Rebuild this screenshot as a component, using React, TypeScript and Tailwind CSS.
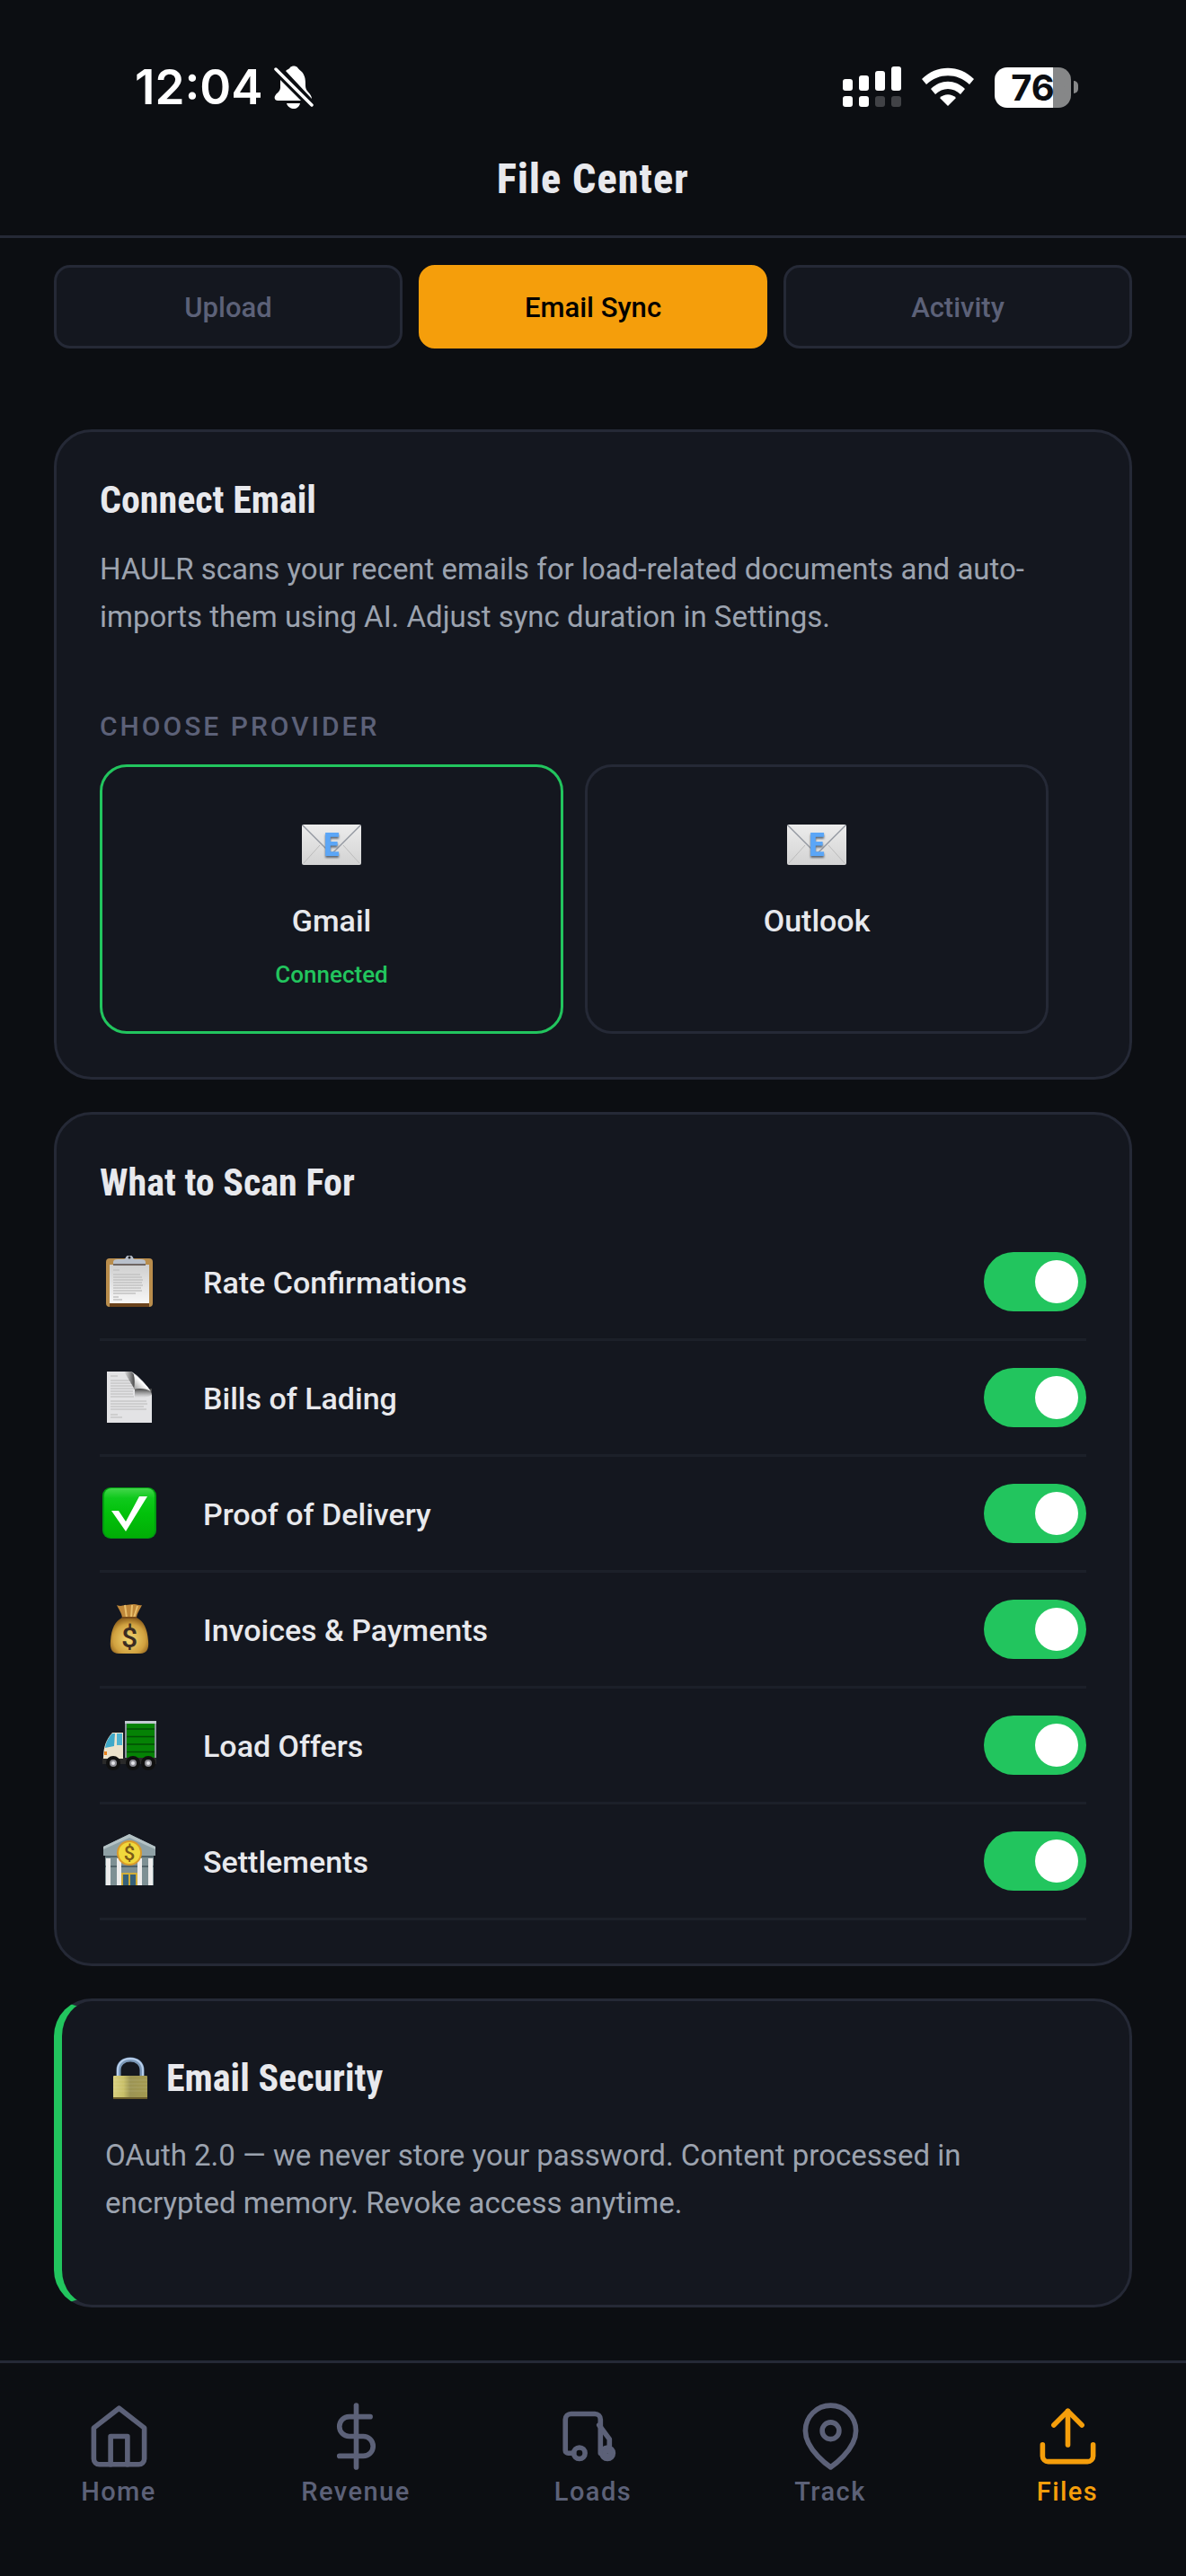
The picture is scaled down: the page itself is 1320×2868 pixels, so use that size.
import React, { useState } from 'react';

const ClipboardIcon: React.FC = () => (
  <svg viewBox="0 0 60 60" className="size-[60px]" aria-hidden="true">
    <defs>
      <linearGradient id="paper" x1="0" y1="0" x2="0" y2="1">
        <stop offset="0" stopColor="#cfcfcf" />
        <stop offset="1" stopColor="#f7f7f7" />
      </linearGradient>
    </defs>
    <rect x="4" y="4" width="52" height="54" rx="4" fill="#b98d4c" />
    <rect x="8" y="54" width="44" height="4" fill="#6b431c" />
    <rect x="8" y="11" width="44" height="43" fill="url(#paper)" />
    <path d="M12 12V8c0-2 2-3 5-3h7c2 0 2-4 4-4h4c2 0 2 4 4 4h7c3 0 5 1 5 3v4z" fill="#b9c0cb" />
    <path d="M12 10h36v2H12z" fill="#6f6663" />
    <circle cx="30" cy="3" r="1.5" fill="#222" />
    <path
      d="M12 17h7M12 22h30M12 25h32M12 28h33M12 31h32M12 34h33M12 37h31M12 40h32M12 43h25M12 47h6M12 50h10"
      stroke="#c2c2c2"
      strokeWidth="1.4"
    />
  </svg>
);

const PageIcon: React.FC = () => (
  <svg viewBox="0 0 60 60" className="size-[60px]" aria-hidden="true">
    <defs>
      <linearGradient id="curl" x1="0" y1="1" x2="1" y2="0">
        <stop offset="0" stopColor="#8d8d8d" />
        <stop offset="0.5" stopColor="#ffffff" />
        <stop offset="1" stopColor="#bdbdbd" />
      </linearGradient>
      <linearGradient id="curlShade" x1="0" y1="0" x2="1" y2="0">
        <stop offset="0" stopColor="#555" stopOpacity="0" />
        <stop offset="1" stopColor="#444" />
      </linearGradient>
      <linearGradient id="curlShadeDown" x1="0" y1="0" x2="0" y2="1">
        <stop offset="0" stopColor="#444" />
        <stop offset="1" stopColor="#777" stopOpacity="0" />
      </linearGradient>
    </defs>
    <path d="M5 1h26c5 0 24 20 24 26v31H5z" fill="#e3e3e5" />
    <path
      d="M9 6h8M9 11h22M9 14h24M9 17h25M9 20h26M9 23h25M9 26h25M9 29h26M9 34h40M9 37h41M9 40h37M9 43h40M9 49h8M9 52h13"
      stroke="#c8c8c8"
      strokeWidth="1.4"
    />
    <path d="M24 1h7c3 1 5 4 5 8v12z" fill="url(#curlShade)" />
    <path d="M36 20h19v7c-5 4-14 3-19 3z" fill="url(#curlShadeDown)" />
    <path d="M35 4c5 4 15 13 19 19-5-3-13-4-19-2 1-6 1-12 0-17z" fill="url(#curl)" />
  </svg>
);

const CheckIcon: React.FC = () => (
  <svg viewBox="0 0 60 60" className="size-[60px]" aria-hidden="true">
    <defs>
      <linearGradient id="green" x1="0" y1="0" x2="0" y2="1">
        <stop offset="0" stopColor="#43d64b" />
        <stop offset="0.2" stopColor="#0fc91c" />
        <stop offset="0.5" stopColor="#02c20b" />
        <stop offset="1" stopColor="#01ad06" />
      </linearGradient>
    </defs>
    <rect x="0" y="1" width="60" height="57" rx="9" fill="#019c10" />
    <rect x="2" y="2" width="56" height="55" rx="8" fill="url(#green)" />
    <path d="M10 27h8l8 12 15-28h9L26 50z" fill="#fff" />
  </svg>
);

const MoneyBagIcon: React.FC = () => (
  <svg viewBox="0 0 60 60" className="size-[60px]" aria-hidden="true">
    <defs>
      <radialGradient id="bag" cx="0.5" cy="0.6" r="0.6">
        <stop offset="0" stopColor="#f4d873" />
        <stop offset="0.7" stopColor="#d0a13f" />
        <stop offset="1" stopColor="#8d5f1c" />
      </radialGradient>
    </defs>
    <path d="M16 3c5 2 6 0 10 0s5-1 9-1 6 2 9 1c-2 5-6 9-6 15H22c0-6-4-10-6-15z" fill="#c0883a" />
    <path d="M25 3l2 14M33 3l-1 14M39 4l-4 13" stroke="#e9bf6c" strokeWidth="2" />
    <path d="M22 17h16c8 4 12 12 13 26 1 9-2 14-9 14H18c-7 0-10-5-9-14 1-14 5-22 13-26z" fill="url(#bag)" />
    <path d="M22 17h16" stroke="#7a4c18" strokeWidth="2" />
    <text x="30" y="50" textAnchor="middle" fontFamily="Roboto, sans-serif" fontSize="32" fontWeight="500" fill="#3b2c22">
      $
    </text>
  </svg>
);

const TruckEmoji: React.FC = () => (
  <svg viewBox="0 0 60 60" className="size-[60px]" aria-hidden="true">
    <rect x="25" y="3" width="35" height="48" fill="#8b949c" />
    <rect x="25" y="3" width="35" height="3" fill="#c3cbd2" />
    <rect x="27" y="6" width="31" height="40" fill="#058205" />
    <path d="M27 12h31M27 20.500h31M27 29h31M27 37.500h31" stroke="#024d04" strokeWidth="1.500" />
    <path d="M0 44h60v7H0z" fill="#2a2a2a" />
    <path d="M1 44c0-12 3-20 10-28h12v29H1z" fill="#ece3cc" />
    <path d="M3 33c1-7 4-12 8-16h3l-1 14z" fill="#3fa9c9" />
    <rect x="16" y="17" width="6" height="13" fill="#4fb3d0" />
    <rect x="2" y="37" width="3" height="4" fill="#e8811c" />
    <g fill="#8d8d94" stroke="#101010" strokeWidth="4">
      <circle cx="12" cy="50" r="6" />
      <circle cx="34" cy="50" r="6" />
      <circle cx="51" cy="50" r="6" />
    </g>
    <g fill="#e5e5ea">
      <circle cx="12" cy="50" r="2" />
      <circle cx="34" cy="50" r="2" />
      <circle cx="51" cy="50" r="2" />
    </g>
  </svg>
);

const BankIcon: React.FC = () => (
  <svg viewBox="0 0 60 60" className="size-[60px]" aria-hidden="true">
    <path d="M30 0l29 14v10H1V14z" fill="#8fa1a5" />
    <path d="M30 0l29 14v3L30 4 1 17v-3z" fill="#b4c2c5" />
    <rect x="3" y="24" width="54" height="33" fill="#7d9094" />
    <path d="M3 25h54M3 36h54" stroke="#52646a" strokeWidth="2" />
    <g fill="#ececec">
      <rect x="4" y="27" width="5" height="30" />
      <rect x="16" y="27" width="5" height="30" />
      <rect x="39" y="27" width="5" height="30" />
      <rect x="51" y="27" width="5" height="30" />
    </g>
    <rect x="21" y="43" width="18" height="14" fill="#d0ae3a" />
    <path d="M23 45h6v12h-6zM31 45h6v12h-6z" fill="#36617a" />
    <circle cx="30" cy="21" r="14" fill="#d99a2b" />
    <circle cx="30" cy="21" r="12" fill="#f0d83c" />
    <text x="30" y="29" textAnchor="middle" fontFamily="Roboto, sans-serif" fontSize="22" fontWeight="500" fill="#7b5a17">
      $
    </text>
  </svg>
);

const LockIcon: React.FC = () => (
  <svg viewBox="0 0 40 48" className="h-12 w-10" aria-hidden="true">
    <defs>
      <linearGradient id="brass" x1="0" y1="0" x2="1" y2="0">
        <stop offset="0" stopColor="#d9d080" />
        <stop offset="0.3" stopColor="#c9c069" />
        <stop offset="0.5" stopColor="#9c9454" />
        <stop offset="1" stopColor="#a49a50" />
      </linearGradient>
    </defs>
    <path d="M7 22V15C7 7 13 3 20 3s13 4 13 12v7" fill="none" stroke="#7b98b8" strokeWidth="5" />
    <path d="M6 22V15C6 7 12 2 20 2s14 5 14 13v7" fill="none" stroke="#b8cfec" strokeWidth="2" />
    <rect x="1" y="21" width="38" height="26" rx="1" fill="url(#brass)" />
    <path d="M1 26h38M1 30h38M1 34h38M1 38h38" stroke="#fff" strokeOpacity="0.12" />
    <rect x="1" y="45" width="38" height="2" fill="#6b5c2a" />
  </svg>
);

const EnvelopeIcon: React.FC = () => (
  <svg viewBox="0 0 66 45" className="h-[45px] w-[66px] overflow-visible" aria-hidden="true">
    <defs>
      <linearGradient id="envelope" x1="0" y1="0" x2="0" y2="1">
        <stop offset="0" stopColor="#ececec" />
        <stop offset="1" stopColor="#d3d3d3" />
      </linearGradient>
    </defs>
    <rect width="66" height="45" rx="2" fill="url(#envelope)" />
    <path d="M2 43l18-20M64 43L46 23" stroke="#bcbcbc" fill="none" />
    <path d="M1 1l28 28c3 3 5 3 8 0L65 1" stroke="#9297a0" strokeWidth="1.4" fill="none" />
    <text
      x="33"
      y="35"
      textAnchor="middle"
      fontFamily="'Roboto Condensed', Roboto, sans-serif"
      fontSize="36"
      fontWeight="800"
      fill="#5ba6f7"
      className="drop-shadow-[0_2px_1px_#5c6570]"
    >
      E
    </text>
  </svg>
);

const tabs = ['Upload', 'Email Sync', 'Activity'];

const providers = [
  { name: 'Gmail', connected: true },
  { name: 'Outlook', connected: false },
];

const scanTypes = [
  { id: 'rates', label: 'Rate Confirmations', Icon: ClipboardIcon },
  { id: 'bills', label: 'Bills of Lading', Icon: PageIcon },
  { id: 'proof', label: 'Proof of Delivery', Icon: CheckIcon },
  { id: 'invoices', label: 'Invoices & Payments', Icon: MoneyBagIcon },
  { id: 'offers', label: 'Load Offers', Icon: TruckEmoji },
  { id: 'settlements', label: 'Settlements', Icon: BankIcon },
];

const navItems = [
  {
    label: 'Home',
    drawing: (
      <>
        <path d="M3 9l9-7 9 7v11a2 2 0 0 1-2 2H5a2 2 0 0 1-2-2z" />
        <path d="M9 22V12h6v10" />
      </>
    ),
  },
  {
    label: 'Revenue',
    drawing: (
      <>
        <path d="M12 1v22" />
        <path d="M17 5H9.500a3.500 3.500 0 0 0 0 7h5a3.500 3.500 0 0 1 0 7H6" />
      </>
    ),
  },
  {
    label: 'Loads',
    drawing: (
      <>
        <path d="M5 18H3a1 1 0 0 1-1-1V6a2 2 0 0 1 2-2h8.500a2 2 0 0 1 2 2v12" />
        <path d="M14 8l3.700 5v4" />
        <circle cx="7" cy="18" r="2" />
        <circle cx="17" cy="18" r="2" />
        <circle cx="17" cy="18" r="1" />
      </>
    ),
  },
  {
    label: 'Track',
    drawing: (
      <>
        <path d="M21 10c0 7-9 13-9 13s-9-6-9-13a9 9 0 0 1 18 0z" />
        <circle cx="12" cy="10" r="3" />
      </>
    ),
  },
  {
    label: 'Files',
    drawing: (
      <>
        <path d="M21 15v4a2 2 0 0 1-2 2H5a2 2 0 0 1-2-2v-4" />
        <path d="M17 8l-5-5-5 5" />
        <path d="M12 3v12" />
      </>
    ),
  },
];

const StatusBar: React.FC = () => (
  <div className="flex h-16 items-center justify-between pr-[120px] pl-[150px] text-white">
    <div className="flex items-center gap-3">
      <span className="font-['Inter',sans-serif] text-[53px] leading-[64px] font-semibold">12:04</span>
      <svg viewBox="0 0 44 48" className="h-12 w-11" fill="currentColor" aria-label="Silent mode" role="img">
        <path d="M13 6c2-2 4-2 5-4 2-2 6-2 8 0 1 2 3 3 5 5 4 5 4 9 4 16 0 6 7 8 7 14z" />
        <path d="M7 16l23 23H4c-3 0-4-3-3-5 2-4 5-4 6-9z" />
        <path d="M14 42h15c-1 4-4 6-7 6s-7-2-8-6z" />
        <path d="M2 4l40 40" stroke="currentColor" strokeWidth="3.500" strokeLinecap="round" />
      </svg>
    </div>
    <div className="flex items-center gap-[23px]">
      <svg viewBox="0 0 65 46" className="h-[46px] w-[65px]" fill="currentColor" aria-label="Signal" role="img">
        <rect x="0" y="14" width="11" height="13" rx="3" />
        <rect x="18" y="10" width="11" height="17" rx="3" />
        <rect x="36" y="5" width="11" height="22" rx="3" />
        <rect x="54" y="0" width="11" height="27" rx="3" />
        <rect x="0" y="33" width="11" height="12" rx="3" />
        <rect x="18" y="33" width="11" height="12" rx="3" />
        <rect x="36" y="33" width="11" height="12" rx="3" opacity="0.22" />
        <rect x="54" y="33" width="11" height="12" rx="3" opacity="0.22" />
      </svg>
      <svg viewBox="0 0 58 44" className="h-11 w-[58px]" fill="currentColor" aria-label="Wi-Fi" role="img">
        <path d="M0 13C16-3.500 42-3.500 58 13l-5 6C39 6 19 6 5 19z" />
        <path d="M10 24c11-11 27-11 38 0l-5 6c-8-8-20-8-28 0z" />
        <path d="M20 34c5-5 13-5 18 0l-9 9z" />
      </svg>
      <div className="flex items-center gap-[3px]">
        <div className="flex h-[45px] w-[85px] items-center justify-center rounded-[14px] bg-linear-to-r from-white from-76% to-[#868788] to-76%">
          <span className="font-['Inter',sans-serif] text-[40px] leading-[45px] font-bold text-[#0c0e12]">76</span>
        </div>
        <div className="h-[14px] w-[5px] rounded-r-full bg-[#868788]" />
      </div>
    </div>
  </div>
);

const cardTitle = "font-['Roboto_Condensed','Roboto',sans-serif] text-[42px] leading-[48px] font-bold text-[#e8e9ed]";

const App: React.FC = () => {
  const [activeTab, setActiveTab] = useState('Email Sync');

  return (
    <div className="flex min-h-screen flex-col bg-[#0c0e12] font-['Roboto',sans-serif] text-[#e8e9ed]">
      {/* Header */}
      <header className="border-b-[3px] border-[#252936] pt-[65px] pb-[39px]">
        <StatusBar />
        <h1 className="mt-[46px] text-center font-['Roboto_Condensed','Roboto',sans-serif] text-[46px] leading-[48px] font-extrabold tracking-wide">
          File Center
        </h1>
      </header>

      <main className="flex grow flex-col px-[60px] pt-[30px] pb-[59px]">
        {/* Tabs */}
        <div className="mb-[90px] grid grid-cols-3 gap-[18px]">
          {tabs.map((tab) => (
            <button
              key={tab}
              type="button"
              onClick={() => setActiveTab(tab)}
              className={`h-[93px] rounded-[18px] border-[3px] pt-1 text-[31px] font-medium ${
                tab === activeTab
                  ? 'border-[#f59e0b] bg-[#f59e0b] text-black'
                  : 'border-[#252936] bg-[#14171f] text-[#5c6178]'
              }`}
            >
              {tab}
            </button>
          ))}
        </div>

        <div className="flex flex-col gap-9">
          {/* Connect Email */}
          <section className="rounded-[42px] border-[3px] border-[#252936] bg-[#14171f] px-12 pt-[52px] pb-12">
            <h2 className={cardTitle}>Connect Email</h2>
            <p className="mt-[26px] text-[33px] leading-[53px] text-[#9ca3af]">
              HAULR scans your recent emails for load-related documents and auto-imports them using AI. Adjust sync
              duration in Settings.
            </p>
            <h3 className="mt-[78px] text-[30px] leading-9 font-medium tracking-widest text-[#5c6178] uppercase">
              Choose Provider
            </h3>
            <div className="mt-6 flex gap-6">
              {providers.map((provider) => (
                <button
                  key={provider.name}
                  type="button"
                  className={`flex w-[47%] flex-col items-center rounded-[30px] border-[3px] pt-16 pb-[45px] ${
                    provider.connected ? 'border-[#22c55e]' : 'border-[#252936]'
                  }`}
                >
                  <EnvelopeIcon />
                  <span className="mt-[38px] text-[34px] leading-[48px] font-medium">{provider.name}</span>
                  {provider.connected && (
                    <span className="mt-[18px] text-[26px] leading-9 font-medium text-[#22c55e]">Connected</span>
                  )}
                </button>
              ))}
            </div>
          </section>

          {/* What to Scan For */}
          <section className="rounded-[42px] border-[3px] border-[#252936] bg-[#14171f] px-12 pt-[52px] pb-12">
            <h2 className={cardTitle}>What to Scan For</h2>
            <ul className="mt-[23px]">
              {scanTypes.map(({ id, label, Icon }) => (
                <li key={id} className="flex items-center border-b-[3px] border-[#1c2029] py-[30px] pl-[3px]">
                  <Icon />
                  <label htmlFor={id} className="grow pt-[2px] pl-[52px] text-[34px] leading-[48px] font-medium">
                    {label}
                  </label>
                  <input
                    id={id}
                    type="checkbox"
                    role="switch"
                    defaultChecked
                    className="h-[66px] w-[114px] appearance-none rounded-full bg-[#252936] p-[9px] before:block before:size-12 before:rounded-full before:bg-white checked:bg-[#22c55e] checked:before:translate-x-12"
                  />
                </li>
              ))}
            </ul>
          </section>

          {/* Email Security */}
          <section className="rounded-[42px] border-[3px] border-l-[9px] border-[#252936] border-l-[#22c55e] bg-[#14171f] px-12 pt-[62px] pb-[87px]">
            <h2 className={`flex items-center gap-5 pl-2 ${cardTitle}`}>
              <LockIcon />
              Email Security
            </h2>
            <p className="mt-[35px] text-[33px] leading-[53px] text-[#9ca3af]">
              OAuth 2.0 — we never store your password. Content processed in encrypted memory. Revoke access anytime.
            </p>
          </section>
        </div>
      </main>

      {/* Bottom Navigation */}
      <nav className="grid grid-cols-5 border-t-[3px] border-[#252936] pt-11 pb-[76px]">
        {navItems.map((item) => (
          <a
            key={item.label}
            href={`#${item.label.toLowerCase()}`}
            className={`flex flex-col items-center gap-[6px] ${item.label === 'Files' ? 'text-[#f59e0b]' : 'text-[#5c6178]'}`}
          >
            <svg
              viewBox="0 0 24 24"
              className="size-[75px]"
              fill="none"
              stroke="currentColor"
              strokeWidth="1.8"
              strokeLinecap="round"
              strokeLinejoin="round"
              aria-hidden="true"
            >
              {item.drawing}
            </svg>
            <span className="text-[29px] leading-9 font-medium tracking-wider">{item.label}</span>
          </a>
        ))}
      </nav>
    </div>
  );
};

export default App;
